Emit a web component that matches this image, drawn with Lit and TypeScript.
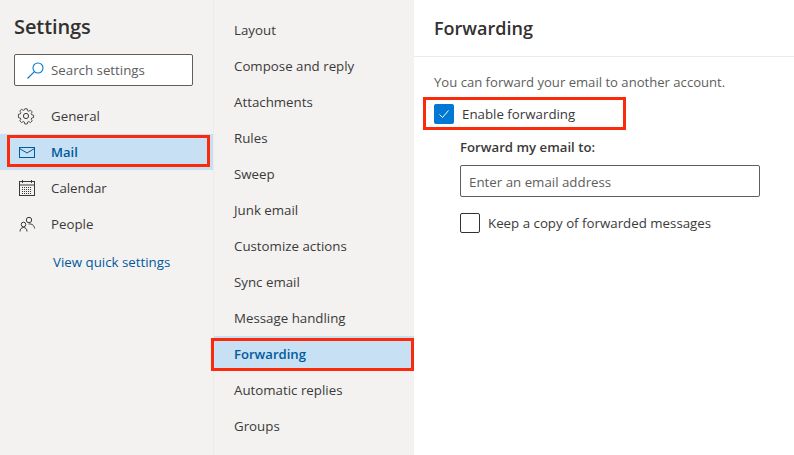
import { LitElement, html, css, svg } from "lit";
import { customElement } from "lit/decorators.js";

const gear = svg`<circle cx="9" cy="10" r="2.6"/><path d="M7.600 2.500h2.800l.4 2.100 1.400.6 1.800-1.200 2 2-1.200 1.800.6 1.400 2.100.4v2.800l-2.100.4-.6 1.400 1.200 1.800-2 2-1.800-1.200-1.400.6-.4 2.100H7.600l-.4-2.100-1.400-.6-1.800 1.200-2-2 1.200-1.800-.6-1.400-2.100-.4V8.600l2.100-.4.6-1.400-1.200-1.800 2-2 1.800 1.200 1.400-.6z" transform="translate(1 .6) scale(.89)"/>`;

@customElement("app-root")
export class AppRoot extends LitElement {
  static styles = css`
    :host {
      display: block;
      width: 794px;
      height: 455px;
      overflow: hidden;
      font-family: "Open Sans", "Noto Sans", sans-serif;
      font-size: 13.3px;
      color: #3b3a39;
    }
    .page { display: grid; grid-template-columns: 213px 201px 380px; height: 455px; }
    .left { background: #f3f2f1; display: flex; flex-direction: column; }
    .left h1 {
      margin: 0; padding: 12px 0 0 14px; height: 42px; box-sizing: border-box;
      font-size: 20px; font-weight: 600; line-height: 30px; color: #323130; letter-spacing: -0.1px;
    }
    .search {
      margin: 12px 0 12px 14px; width: 179px; height: 32px; box-sizing: border-box;
      display: flex; align-items: center; gap: 6px; padding-left: 12px;
      background: #fff; border: 1px solid #605e5c; border-radius: 2px; color: #605e5c;
    }
    .search svg { width: 18px; height: 18px; fill: none; stroke: #0078d4; stroke-width: 1.1; }
    .nav { position: relative; height: 36px; display: flex; align-items: center; gap: 14px; padding-left: 17px; }
    .nav svg { width: 20px; height: 20px; fill: none; stroke: #3b3a39; stroke-width: 1; flex: none; }
    .nav.sel { background: #c7e0f4; color: #005a9e; font-weight: 600; font-size: 13px; }
    .nav.sel svg { stroke: #005a9e; }
    .nav.sel::after {
      content: ""; position: absolute; left: 7px; top: 1px; width: 203px; height: 32px;
      box-sizing: border-box; border: 3px solid #fa2a0a;
    }
    .link { margin: 2px 0 0 53px; line-height: 36px; color: #005a9e; }
    .mid { background: #f3f2f1; border-left: 1px solid #edebe9; padding-top: 12px; box-sizing: border-box; }
    .item { position: relative; height: 36px; display: flex; align-items: center; padding-left: 20px; }
    .item.sel { background: #c7e0f4; color: #005a9e; font-weight: 600; height: 35px; margin-bottom: 1px; font-size: 13.1px; }
    .item.sel::after {
      content: ""; position: absolute; left: -3px; top: 2px; width: 203px; height: 33px;
      box-sizing: border-box; border: 3px solid #fa2a0a;
    }
    .right { background: #fff; display: flex; flex-direction: column; }
    .right h2 {
      margin: 0; height: 57px; box-sizing: border-box; padding: 13px 0 0 20px;
      border-bottom: 1px solid #edebe9;
      font-size: 18px; font-weight: 600; line-height: 30px; color: #323130;
    }
    .intro { margin: 15px 0 0 20px; line-height: 20px; color: #605e5c; font-size: 13.1px; }
    .enable { position: relative; margin: 12px 0 0 20px; height: 20px; display: flex; align-items: center; gap: 8px; }
    .enable::after {
      content: ""; position: absolute; left: -11px; top: -7px; width: 203px; height: 33px;
      box-sizing: border-box; border: 3px solid #fa2a0a;
    }
    .box { width: 20px; height: 20px; box-sizing: border-box; border-radius: 2px; flex: none; }
    .box.on { background: #0078d4; display: flex; align-items: center; justify-content: center; }
    .box.on svg { width: 12px; height: 12px; fill: none; stroke: #fff; stroke-width: 1; }
    .box.off { border: 1px solid #323130; background: #fff; }
    .label { margin: 13px 0 0 46px; font-weight: 600; font-size: 13.2px; line-height: 20px; }
    .input {
      margin: 8px 0 0 46px; width: 300px; height: 32px; box-sizing: border-box;
      border: 1px solid #605e5c; border-radius: 2px; display: flex; align-items: center;
      padding: 1px 0 0 8px; color: #605e5c;
    }
    .keep { margin: 16px 0 0 46px; display: flex; align-items: center; gap: 8px; height: 20px; }
  `;

  render() {
    const items = ["Layout","Compose and reply","Attachments","Rules","Sweep","Junk email","Customize actions","Sync email","Message handling","Forwarding","Automatic replies","Groups"];
    return html`<div class="page">
      <div class="left">
        <h1>Settings</h1>
        <div class="search">
          <svg viewBox="0 0 18 18"><circle cx="11" cy="7" r="5"/><path d="M7.400 10.600 .5 17.500"/></svg>
          <span>Search settings</span>
        </div>
        <div class="nav"><svg viewBox="0 0 20 20">${gear}</svg>General</div>
        <div class="nav sel"><svg viewBox="0 0 20 20"><rect x="2.500" y="5.500" width="15" height="10"/><path d="M2.500 6.500 10 11 17.500 6.500"/></svg>Mail</div>
        <div class="nav"><svg viewBox="0 0 20 20"><rect x="2.500" y="3.500" width="15" height="14"/><path d="M2.500 7h15M5.500 2v3M14.500 2v3"/><path d="M5 9.500h10M5 11.500h10M5 13.500h10M5 15.500h10" stroke-dasharray="1 1"/></svg>Calendar</div>
        <div class="nav"><svg viewBox="0 0 20 20"><circle cx="12" cy="6" r="2.700"/><circle cx="6.500" cy="10.500" r="2.300"/><path d="M3 17.500c0-2.500 1.500-4 3.500-4s3.500 1.500 3.500 4M11.500 10c3.500-.5 6 1.500 6 4.500"/></svg>People</div>
        <div class="link">View quick settings</div>
      </div>
      <div class="mid">
        ${items.map((t) => html`<div class="item ${t === "Forwarding" ? "sel" : ""}">${t}</div>`)}
      </div>
      <div class="right">
        <h2>Forwarding</h2>
        <div class="intro">You can forward your email to another account.</div>
        <div class="enable">
          <div class="box on"><svg viewBox="0 0 12 12"><path d="M1.500 6.500 4.500 9.500 10.500 2.500"/></svg></div>
          <span>Enable forwarding</span>
        </div>
        <div class="label">Forward my email to:</div>
        <div class="input">Enter an email address</div>
        <div class="keep"><div class="box off"></div><span>Keep a copy of forwarded messages</span></div>
      </div>
    </div>`;
  }
}
